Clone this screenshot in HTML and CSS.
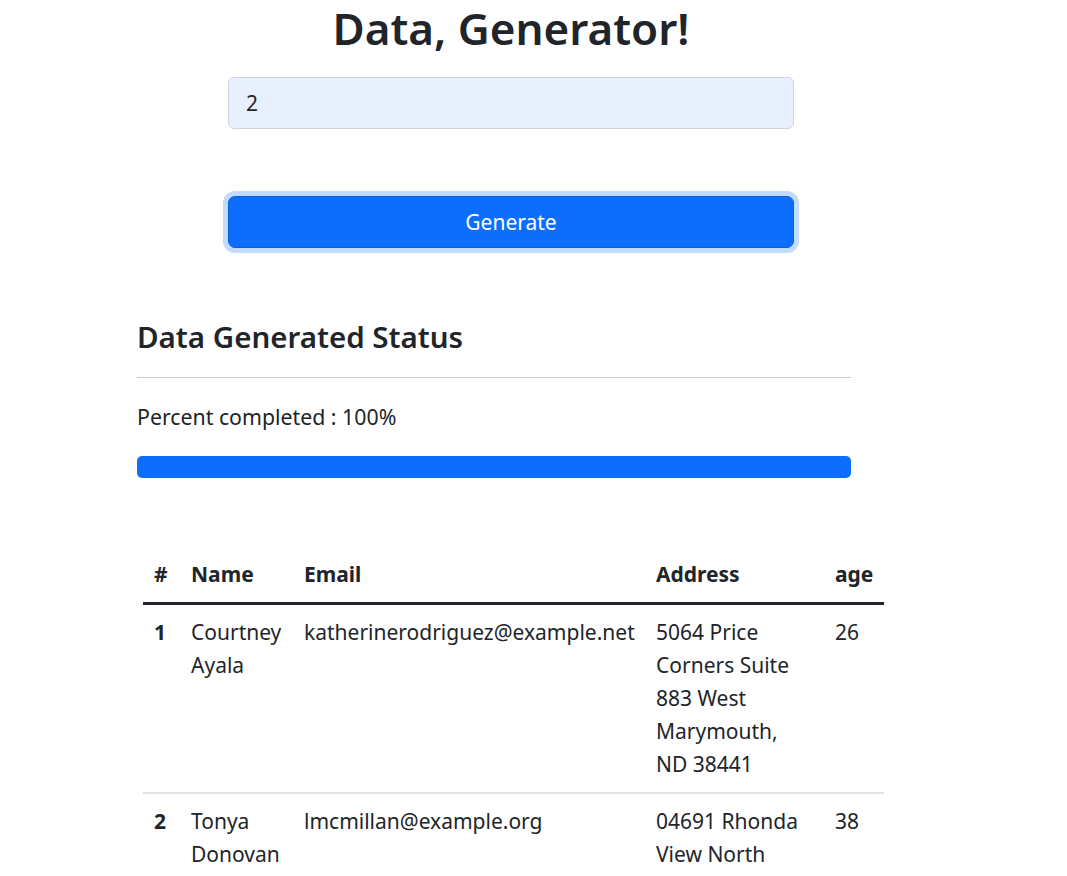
FILE: index.html
```html
<!DOCTYPE html>
<html lang="en">
<head>
<meta charset="utf-8">
<title>Data, Generator!</title>
<link rel="stylesheet" href="styles.css">
</head>
<body>
<main class="page">
  <section class="generator">
    <h1 class="title">Data, Generator!</h1>
    <input class="count-input" type="text" value="2">
    <button class="btn-generate" type="button">Generate</button>
  </section>

  <section class="status">
    <h4 class="status-title">Data Generated Status</h4>
    <hr class="divider">
    <p class="percent">Percent completed : 100%</p>
    <div class="progress"><div class="progress-bar" style="width: 100%"></div></div>
  </section>

  <table class="data-table">
    <colgroup>
      <col class="col-num">
      <col class="col-name">
      <col class="col-email">
      <col class="col-address">
      <col class="col-age">
    </colgroup>
    <thead>
      <tr><th>#</th><th>Name</th><th>Email</th><th>Address</th><th>age</th></tr>
    </thead>
    <tbody>
      <tr>
        <th>1</th>
        <td>Courtney Ayala</td>
        <td>katherinerodriguez@example.net</td>
        <td class="address">5064 Price Corners Suite 883 West Marymouth, ND 38441</td>
        <td>26</td>
      </tr>
      <tr>
        <th>2</th>
        <td>Tonya Donovan</td>
        <td>lmcmillan@example.org</td>
        <td class="address">04691 Rhonda View North Lake Kristen, KS 29317</td>
        <td>38</td>
      </tr>
    </tbody>
  </table>
</main>
</body>
</html>
```

FILE: styles.css
```css
* { box-sizing: border-box; }

html, body {
  margin: 0;
  padding: 0;
  background: #fff;
}

body {
  font-family: "Noto Sans", "Open Sans", sans-serif;
  color: #212529;
  font-size: 22px;
  line-height: 1.5;
}

.page {
  display: flex;
  flex-direction: column;
  align-items: flex-start;
}

.generator {
  width: 566px;
  margin-left: 228px;
  display: flex;
  flex-direction: column;
}

.title {
  margin: 0;
  text-align: center;
  font-size: 44px;
  font-weight: 600;
  line-height: 57px;
}

.count-input {
  margin-top: 20px;
  height: 52px;
  width: 100%;
  padding: 0 17px;
  font: inherit;
  font-size: 21px;
  color: #212529;
  background: #e8f0fe;
  border: 1px solid #ced4da;
  border-radius: 6px;
  outline: none;
}

.btn-generate {
  margin-top: 67px;
  height: 52px;
  width: 100%;
  padding: 2px 0 0;
  font: inherit;
  font-size: 21px;
  color: #fff;
  background: #0d6efd;
  border: 1px solid #0b5ed7;
  border-radius: 7px;
  box-shadow: 0 0 0 5px rgba(13, 110, 253, 0.25);
  cursor: pointer;
}

.status {
  width: 714px;
  margin-left: 137px;
  margin-top: 70px;
  display: flex;
  flex-direction: column;
}

.status-title {
  margin: 0;
  font-size: 29.5px;
  font-weight: 600;
  line-height: 37px;
}

.divider {
  margin: 22px 0 0;
  border: 0;
  border-top: 1px solid #c8c9ca;
  height: 0;
}

.percent {
  margin: 22px 0 0;
  font-size: 21.3px;
  line-height: 33px;
}

.progress {
  margin-top: 23px;
  height: 22px;
  border-radius: 5px;
  background: #e9ecef;
  overflow: hidden;
}

.progress-bar {
  height: 100%;
  background: #0d6efd;
}

.data-table {
  margin-left: 143px;
  margin-top: 69px;
  width: 741px;
  border-collapse: collapse;
  table-layout: fixed;
  font-size: 21px;
  line-height: 33px;
}

.col-num { width: 37px; }
.col-name { width: 113px; }
.col-email { width: 352px; }
.col-address { width: 179px; }
.col-age { width: 60px; }

.data-table th,
.data-table td {
  padding: 11px;
  text-align: left;
  vertical-align: top;
  border-bottom: 2px solid #dee2e6;
}

.data-table td.address { padding-right: 20px; }

.data-table th { font-weight: 700; }

.data-table thead th {
  vertical-align: bottom;
  border-bottom: 3px solid #212529;
}
```
